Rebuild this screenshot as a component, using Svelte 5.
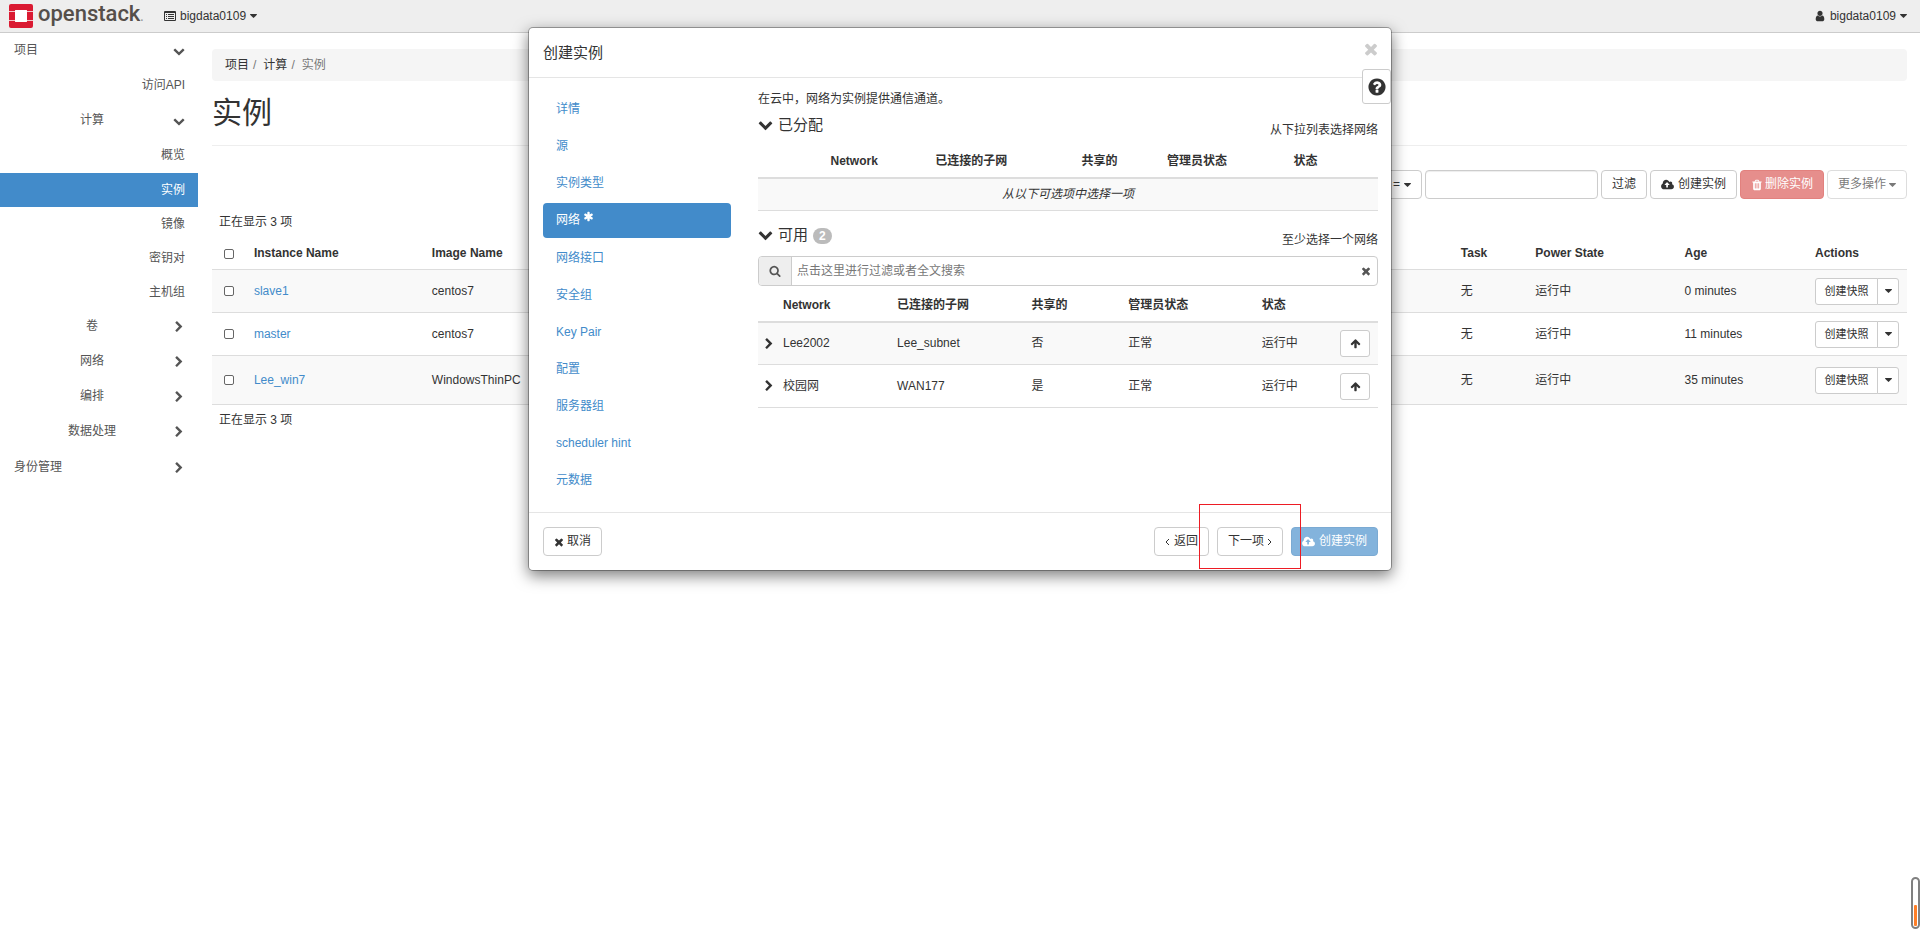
<script>
  const icons = {
    down: 'M1683 808l-742 741q-19 19-45 19t-45-19l-742-741q-19-19-19-45.5t19-45.5l166-165q19-19 45-19t45 19l531 531 531-531q19-19 45-19t45 19l166 165q19 19 19 45.5t-19 45.5z',
    right: 'M1363 877l-742 742q-19 19-45 19t-45-19l-166-166q-19-19-19-45t19-45l531-531-531-531q-19-19-19-45t19-45l166-166q19-19 45-19t45 19l742 742q19 19 19 45t-19 45z',
    times: 'M1490 1322q0 40-28 68l-136 136q-28 28-68 28t-68-28l-294-294-294 294q-28 28-68 28t-68-28l-136-136q-28-28-28-68t28-68l294-294-294-294q-28-28-28-68t28-68l136-136q28-28 68-28t68 28l294 294 294-294q28-28 68-28t68 28l136 136q28 28 28 68t-28 68l-294 294 294 294q28 28 28 68z',
    search: 'M1216 832q0-185-131.5-316.5t-316.5-131.5-316.5 131.5-131.5 316.5 131.5 316.5 316.5 131.5 316.5-131.5 131.5-316.5zm512 832q0 52-38 90t-90 38q-54 0-90-38l-343-342q-179 124-399 124-143 0-273.5-55.5t-225-150-150-225-55.5-273.5 55.5-273.5 150-225 225-150 273.5-55.5 273.5 55.5 225 150 150 225 55.5 273.5q0 220-124 399l343 343q37 37 37 90z',
    asterisk: 'M1546 1050q46 26 59.5 77.5t-12.5 97.5l-64 110q-26 46-77.5 59.5t-97.5-12.5l-266-153v307q0 52-38 90t-90 38h-128q-52 0-90-38t-38-90v-307l-266 153q-46 26-97.5 12.5t-77.5-59.5l-64-110q-26-46-12.5-97.5t59.5-77.5l266-154-266-154q-46-26-59.5-77.5t12.5-97.5l64-110q26-46 77.5-59.5t97.5 12.5l266 153v-307q0-52 38-90t90-38h128q52 0 90 38t38 90v307l266-153q46-26 97.5-12.5t77.5 59.5l64 110q26 46 12.5 97.5t-59.5 77.5l-266 154z',
    cloud: 'M1280 864q0-14-9-23l-352-352q-9-9-23-9t-23 9l-351 351q-10 12-10 24 0 14 9 23t23 9h224v352q0 13 9.5 22.5t22.5 9.5h192q13 0 22.5-9.5t9.5-22.5v-352h224q13 0 22.5-9.5t9.5-22.5zm640 288q0 159-112.5 271.5t-271.5 112.5h-1088q-185 0-316.5-131.5t-131.5-316.5q0-130 70-240t188-165q-2-30-2-43 0-212 150-362t362-150q156 0 285.5 87t188.5 231q71-62 166-62 106 0 181 75t75 181q0 76-41 138 130 31 213.5 135.5t83.5 238.5z',
    trash: 'M704 1376v-704q0-14-9-23t-23-9h-64q-14 0-23 9t-9 23v704q0 14 9 23t23 9h64q14 0 23-9t9-23zm256 0v-704q0-14-9-23t-23-9h-64q-14 0-23 9t-9 23v704q0 14 9 23t23 9h64q14 0 23-9t9-23zm256 0v-704q0-14-9-23t-23-9h-64q-14 0-23 9t-9 23v704q0 14 9 23t23 9h64q14 0 23-9t9-23zm-544-992h448l-48-117q-7-9-17-11h-317q-10 2-17 11zm928 32v64q0 14-9 23t-23 9h-96v948q0 83-47 143.5t-113 60.5h-832q-66 0-113-58.5t-47-141.5v-952h-96q-14 0-23-9t-9-23v-64q0-14 9-23t23-9h309l70-167q15-37 54-63t79-26h320q40 0 79 26t54 63l70 167h309q14 0 23 9t9 23z',
    user: 'M1536 1399q0 109-62.5 187t-150.5 78h-854q-88 0-150.5-78t-62.5-187q0-85 8.5-160.5t31.5-152 58.5-131 94-89 134.5-34.5q131 128 313 128t313-128q76 0 134.5 34.5t94 89 58.5 131 31.5 152 8.5 160.5zm-256-887q0 159-112.5 271.5t-271.5 112.5-271.5-112.5-112.5-271.5 112.5-271.5 271.5-112.5 271.5 112.5 112.5 271.5z',
    question: 'M1024 1376v-192q0-14-9-23t-23-9h-192q-14 0-23 9t-9 23v192q0 14 9 23t23 9h192q14 0 23-9t9-23zm256-672q0-88-55.5-163t-138.5-116-170-41q-243 0-371 213-15 24 8 42l132 100q7 6 19 6 16 0 25-12 53-68 86-92 34-24 86-24 48 0 85.5 26t37.5 59q0 38-20 61t-68 45q-63 28-115.5 86.5t-52.5 125.5v36q0 14 9 23t23 9h192q14 0 23-9t9-23q0-19 21.5-49.5t54.5-49.5q32-18 49-28.5t46-35 44.5-48 28-60.5 12.5-81zm384 192q0 209-103 385.5t-279.5 279.5-385.5 103-385.5-103-279.5-279.5-103-385.5 103-385.5 279.5-279.5 385.5-103 385.5 103 279.5 279.5 103 385.5z',
    up: 'M1675 971q0 51-37 90l-75 75q-38 38-91 38-54 0-90-38l-294-293v704q0 52-37.5 84.5t-90.5 32.5h-128q-53 0-90.5-32.5t-37.5-84.5v-704l-294 293q-36 38-90 38t-90-38l-75-75q-38-38-38-90 0-53 38-91l651-651q35-37 90-37 54 0 91 37l651 651q37 39 37 91z',
    caret: 'M1408 704q0 26-19 45l-448 448q-19 19-45 19t-45-19l-448-448q-19-19-19-45t19-45 45-19h896q26 0 45 19t19 45z'
  };

  const menu = [
    { label: '项目', kind: 'top', icon: 'down' },
    { label: '访问API', kind: 'entry' },
    { label: '计算', kind: 'group', icon: 'down' },
    { label: '概览', kind: 'entry' },
    { label: '实例', kind: 'leaf', active: true },
    { label: '镜像', kind: 'leaf' },
    { label: '密钥对', kind: 'leaf' },
    { label: '主机组', kind: 'leaf' },
    { label: '卷', kind: 'group', icon: 'right' },
    { label: '网络', kind: 'group', icon: 'right' },
    { label: '编排', kind: 'group', icon: 'right' },
    { label: '数据处理', kind: 'group', icon: 'right' },
    { label: '身份管理', kind: 'top', icon: 'right' }
  ];

  const instances = [
    { name: 'slave1', image: 'centos7', task: '无', power: '运行中', age: '0 minutes' },
    { name: 'master', image: 'centos7', task: '无', power: '运行中', age: '11 minutes' },
    { name: 'Lee_win7', image: 'WindowsThinPC', task: '无', power: '运行中', age: '35 minutes', tall: true }
  ];

  const steps = ['详情', '源', '实例类型', '网络', '网络接口', '安全组', 'Key Pair', '配置', '服务器组', 'scheduler hint', '元数据'];
  const current = '网络';

  const networks = [
    { name: 'Lee2002', subnet: 'Lee_subnet', shared: '否', admin: '正常', status: '运行中' },
    { name: '校园网', subnet: 'WAN177', shared: '是', admin: '正常', status: '运行中' }
  ];
</script>

{#snippet icon(name, size = 12)}
  <svg class="icon" width={size} height={size} viewBox="0 0 1792 1792" aria-hidden="true"><path d={icons[name]} /></svg>
{/snippet}

{#snippet cloud()}
  <svg class="icon" width="13" height="12" viewBox="0 0 1920 1792" aria-hidden="true"><path d={icons.cloud} /></svg>
{/snippet}

{#snippet caret()}
  <svg class="icon" width="7" height="4" viewBox="384 640 1024 576" aria-hidden="true"><path d={icons.caret} /></svg>
{/snippet}

<header class="navbar">
  <a class="brand" href="#home">
    <svg width="24" height="24" viewBox="0 0 24 24" aria-hidden="true">
      <path fill="#f3c3c9" d="M0 7h6v10H0zM18 7h6v10h-6z" />
      <path
        fill="#da1a32"
        d="M2 0h20a2 2 0 0 1 2 2v5h-6a1 1 0 0 0-1-1H7a1 1 0 0 0-1 1H0V2a2 2 0 0 1 2-2zM0 8h6v8H0zM18 8h6v8h-6zM0 17h6a1 1 0 0 0 1 1h10a1 1 0 0 0 1-1h6v5a2 2 0 0 1-2 2H2a2 2 0 0 1-2-2z"
      />
      <path fill="#fff" d="M7 6h10a1 1 0 0 1 1 1v10a1 1 0 0 1-1 1H7a1 1 0 0 1-1-1V7a1 1 0 0 1 1-1z" />
    </svg>
    <span class="wordmark">openstack<small>.</small></span>
  </a>
  <button class="nav-button" type="button">
    <svg width="12" height="10" viewBox="0 0 12 10" aria-hidden="true">
      <path fill="#333" fill-rule="evenodd" d="M1 0h10a1 1 0 0 1 1 1v8a1 1 0 0 1-1 1H1a1 1 0 0 1-1-1V1a1 1 0 0 1 1-1zM1 2v7h10V2zM2 3h1v1H2zM4 3h6v1H4zM2 5h1v1H2zM4 5h6v1H4zM2 7h1v1H2zM4 7h6v1H4z" />
    </svg>
    bigdata0109 {@render caret()}
  </button>
  <button class="nav-button account" type="button">{@render icon('user')}bigdata0109 {@render caret()}</button>
</header>

<div class="layout">
  <nav class="sidebar">
    <ul>
      {#each menu as item}
        <li>
          <a href="#panel" class={item.kind} class:active={item.active}>
            <span>{item.label}</span>
            {#if item.icon}{@render icon(item.icon)}{/if}
          </a>
        </li>
      {/each}
    </ul>
  </nav>

  <main>
    <ol class="breadcrumb">
      <li><a href="#project">项目</a></li>
      <li><a href="#compute">计算</a></li>
      <li>实例</li>
    </ol>
    <h1>实例</h1>
    <div class="toolbar">
      <button class="btn operator" type="button">= {@render caret()}</button>
      <input class="filter" type="text" aria-label="过滤" />
      <button class="btn" type="button">过滤</button>
      <button class="btn" type="button">{@render cloud()}创建实例</button>
      <button class="btn danger" type="button" disabled>{@render icon('trash')}删除实例</button>
      <button class="btn faded" type="button" disabled>更多操作{@render caret()}</button>
    </div>
    <p class="count">正在显示 3 项</p>
    <table class="instances">
      <colgroup>
        <col class="i-check" /><col class="i-name" /><col /><col class="i-task" /><col class="i-power" /><col class="i-age" /><col class="i-actions" />
      </colgroup>
      <thead>
        <tr>
          <th><input type="checkbox" aria-label="全部" /></th>
          <th>Instance Name</th>
          <th>Image Name</th>
          <th>Task</th>
          <th>Power State</th>
          <th>Age</th>
          <th>Actions</th>
        </tr>
      </thead>
      <tbody>
        {#each instances as row}
          <tr class:tall={row.tall}>
            <td><input type="checkbox" aria-label={row.name} /></td>
            <td><a href="#instance">{row.name}</a></td>
            <td>{row.image}</td>
            <td>{row.task}</td>
            <td>{row.power}</td>
            <td>{row.age}</td>
            <td>
              <div class="split">
                <button type="button">创建快照</button><button type="button" aria-label="更多操作">{@render caret()}</button>
              </div>
            </td>
          </tr>
        {/each}
      </tbody>
    </table>
    <p class="count after">正在显示 3 项</p>
  </main>
</div>

<div class="modal" role="dialog" aria-labelledby="modal-title">
  <div class="modal-header">
    <h2 id="modal-title">创建实例</h2>
    <button class="close" type="button" aria-label="关闭">{@render icon('times', 18)}</button>
  </div>
  <button class="help" type="button" aria-label="帮助">{@render icon('question', 20)}</button>
  <div class="modal-body">
    <ul class="steps">
      {#each steps as step}
        <li>
          <a href="#step" class:current={step === current}>{step}{#if step === current}<sup>{@render icon('asterisk', 11)}</sup>{/if}</a>
        </li>
      {/each}
    </ul>
    <div class="pane">
      <p class="intro">在云中，网络为实例提供通信通道。</p>

      <div class="section-head">
        <h3>{@render icon('down', 15)}已分配</h3>
        <span>从下拉列表选择网络</span>
      </div>
      <table class="allocated">
        <colgroup>
          <col class="a-lead" /><col class="a-name" /><col class="a-subnet" /><col class="a-shared" /><col class="a-admin" /><col />
        </colgroup>
        <thead>
          <tr><th></th><th>Network</th><th>已连接的子网</th><th>共享的</th><th>管理员状态</th><th>状态</th></tr>
        </thead>
        <tbody>
          <tr><td colspan="6"><em>从以下可选项中选择一项</em></td></tr>
        </tbody>
      </table>

      <div class="section-head available-head">
        <h3>{@render icon('down', 15)}可用 <b>2</b></h3>
        <span>至少选择一个网络</span>
      </div>
      <div class="search">
        <label for="network-search">{@render icon('search')}</label>
        <input id="network-search" type="text" placeholder="点击这里进行过滤或者全文搜索" />
        <button type="button" aria-label="清除">{@render icon('times')}</button>
      </div>
      <table class="available">
        <colgroup>
          <col class="v-lead" /><col class="v-name" /><col class="v-subnet" /><col class="v-shared" /><col class="v-admin" /><col /><col class="v-action" />
        </colgroup>
        <thead>
          <tr><th></th><th>Network</th><th>已连接的子网</th><th>共享的</th><th>管理员状态</th><th>状态</th><th></th></tr>
        </thead>
        <tbody>
          {#each networks as net}
            <tr>
              <td>{@render icon('right')}</td>
              <td>{net.name}</td>
              <td>{net.subnet}</td>
              <td>{net.shared}</td>
              <td>{net.admin}</td>
              <td>{net.status}</td>
              <td><button type="button" aria-label="分配">{@render icon('up', 11)}</button></td>
            </tr>
          {/each}
        </tbody>
      </table>
    </div>
  </div>
  <div class="modal-footer">
    <button class="btn cancel" type="button">{@render icon('times')}取消</button>
    <button class="btn" type="button">
      <svg class="angle" width="5" height="8" viewBox="0 0 5 8" aria-hidden="true"><path d="M4 1L1 4l3 3" /></svg>返回
    </button>
    <button class="btn next" type="button">
      下一项<svg class="angle" width="5" height="8" viewBox="0 0 5 8" aria-hidden="true"><path d="M1 1l3 3-3 3" /></svg>
      <i class="marker"></i>
    </button>
    <button class="btn primary" type="button" disabled>{@render cloud()}创建实例</button>
  </div>
</div>

<div class="gauge"><i></i></div>

<style>
  :global(body) {
    background: #fff;
    color: #333;
    font: 12px/17px "Liberation Sans", "Noto Sans CJK SC", sans-serif;
  }
  :global(button),
  :global(input) {
    font: inherit;
    color: inherit;
    box-sizing: border-box;
  }
  ul,
  ol,
  p,
  h1,
  h2,
  h3 {
    margin: 0;
    padding: 0;
    list-style: none;
    font-weight: 400;
  }
  a {
    color: #428bca;
    text-decoration: none;
  }
  .icon {
    fill: currentColor;
    flex: none;
  }

  .navbar {
    display: flex;
    align-items: center;
    height: 32px;
    padding: 0 13px 0 9px;
    background: #eee;
    border-bottom: 1px solid #ccc;
  }
  .brand {
    display: flex;
    align-items: center;
    gap: 5px;
    width: 155px;
    color: #554f4a;
  }
  .wordmark {
    font: 500 22px/24px Roboto, sans-serif;
    padding-bottom: 1px;
  }
  .wordmark small {
    font-size: 12px;
    color: #999;
  }
  .nav-button {
    display: flex;
    align-items: center;
    gap: 4px;
    padding: 0;
    border: 0;
    background: none;
  }
  .account {
    margin-left: auto;
  }

  .layout {
    display: flex;
    align-items: flex-start;
  }
  .sidebar {
    flex: none;
    width: 198px;
  }
  .sidebar a {
    display: flex;
    align-items: center;
    height: 35px;
    padding: 0 13px 0 11px;
    color: #555;
  }
  .sidebar a span {
    flex: 1;
  }
  .sidebar .top {
    padding-left: 14px;
  }
  .sidebar li + li .top {
    height: 37px;
  }
  .sidebar .group span {
    text-align: center;
  }
  .sidebar .entry,
  .sidebar .leaf {
    text-align: right;
  }
  .sidebar .leaf {
    height: 34px;
  }
  .sidebar .active {
    background: #428bca;
    color: #fff;
  }

  main {
    flex: 1;
    min-width: 0;
    padding: 16px 13px 0 14px;
  }
  .breadcrumb {
    display: flex;
    align-items: center;
    height: 32px;
    padding: 0 13px;
    background: #f5f5f5;
    border-radius: 4px;
    color: #777;
  }
  .breadcrumb a {
    color: #333;
  }
  .breadcrumb li + li::before {
    content: "/";
    padding: 0 7px 0 4px;
  }
  h1 {
    padding: 15px 0;
    border-bottom: 1px solid #eee;
    font-size: 30px;
    line-height: 34px;
  }
  .toolbar {
    display: flex;
    justify-content: flex-end;
    gap: 3px;
    margin-top: 24px;
  }
  .btn {
    display: inline-flex;
    align-items: center;
    justify-content: center;
    gap: 4px;
    height: 29px;
    padding: 0 10px;
    border: 1px solid #ccc;
    border-radius: 4px;
    background: #fff;
    color: #333;
    white-space: nowrap;
  }
  .filter {
    width: 173px;
    height: 29px;
    border: 1px solid #ccc;
    border-radius: 4px;
    box-shadow: inset 0 1px 1px rgba(0, 0, 0, 0.075);
  }
  .danger {
    gap: 2px;
    background: #d9534f;
    border-color: #d43f3a;
    color: #fff;
    opacity: 0.65;
  }
  .faded {
    gap: 3px;
    opacity: 0.65;
  }
  .primary {
    background: #428bca;
    border-color: #357ebd;
    color: #fff;
    opacity: 0.65;
  }
  .count {
    margin: 15px 0 5px;
    padding-left: 7px;
  }
  .count.after {
    margin-top: 7px;
  }

  table {
    width: 100%;
    table-layout: fixed;
    border-collapse: separate;
    border-spacing: 0;
  }
  th,
  td {
    padding: 0 8px;
    text-align: left;
    vertical-align: middle;
    border-bottom: 1px solid #ddd;
    white-space: nowrap;
  }
  th {
    padding: 9px 8px 7px;
    font-weight: 700;
  }
  tbody tr:nth-child(odd) td {
    background: #f9f9f9;
  }
  .instances tbody td {
    height: 42px;
  }
  .instances tbody .tall td {
    height: 48px;
  }
  .instances th:first-child,
  .instances td:first-child {
    padding-left: 12px;
  }
  .i-check { width: 2%; }
  .i-name { width: 10.5%; }
  .i-task { width: 4.4%; }
  .i-power { width: 8.8%; }
  .i-age { width: 7.7%; }
  .i-actions { width: 5.9%; }
  input[type="checkbox"] {
    display: block;
    appearance: none;
    width: 10px;
    height: 10px;
    margin: 0;
    border: 1px solid #666;
    border-radius: 2px;
    background: #fff;
  }
  .split {
    display: flex;
    width: 84px;
  }
  .split button {
    flex: 1;
    height: 27px;
    padding: 0;
    border: 1px solid #ccc;
    border-radius: 3px 0 0 3px;
    background: #fff;
    font-size: 11px;
  }
  .split button + button {
    display: flex;
    align-items: center;
    justify-content: center;
    flex: 0 0 22px;
    margin-left: -1px;
    border-radius: 0 3px 3px 0;
  }

  .modal {
    position: absolute;
    top: 27px;
    left: 0;
    right: 0;
    width: 45%;
    box-sizing: border-box;
    margin: 0 auto;
    background: #fff;
    background-clip: padding-box;
    border: 1px solid rgba(0, 0, 0, 0.3);
    border-radius: 5px;
    box-shadow: 0 5px 15px rgba(0, 0, 0, 0.5);
  }
  .modal-header {
    display: flex;
    justify-content: space-between;
    align-items: flex-start;
    height: 49px;
    padding: 0 11px 0 14px;
    border-bottom: 1px solid #e5e5e5;
  }
  h2 {
    font-size: 15px;
    line-height: 49px;
  }
  .close {
    display: flex;
    margin-top: 12px;
    padding: 0;
    border: 0;
    background: none;
    color: #ccc;
  }
  .help {
    position: absolute;
    top: 41px;
    right: 0;
    display: flex;
    align-items: center;
    justify-content: center;
    width: 29px;
    height: 35px;
    padding: 0;
    border: 1px solid #ccc;
    border-radius: 3px;
    background: #fff;
  }
  .modal-body {
    display: grid;
    grid-template-columns: 188px 1fr;
    gap: 27px;
    padding: 13px 13px 14px 14px;
  }
  .steps {
    display: flex;
    flex-direction: column;
    gap: 2px;
    padding-top: 1px;
  }
  .steps a {
    display: flex;
    align-items: center;
    height: 35px;
    padding: 0 13px;
    border-radius: 4px;
  }
  .steps .current {
    margin-bottom: 1px;
    background: #428bca;
    color: #fff;
  }
  sup {
    display: flex;
    padding: 0 0 8px 3px;
  }
  .section-head {
    display: flex;
    justify-content: space-between;
    align-items: flex-end;
    height: 24px;
    margin: 7px 0 5px;
  }
  .available-head {
    margin: 14px 0 7px;
  }
  h3 {
    display: flex;
    align-items: center;
    align-self: flex-start;
    gap: 5px;
    font-size: 15px;
    line-height: 19px;
  }
  h3 b {
    margin-top: 2px;
    padding: 0 6px;
    border-radius: 8px;
    background: #bbb;
    color: #fff;
    font-size: 12px;
    line-height: 16px;
  }
  .pane th {
    border-bottom: 2px solid #ddd;
  }
  .allocated td {
    height: 31px;
    text-align: center;
  }
  .a-lead { width: 10.4%; }
  .a-name { width: 16.9%; }
  .a-subnet { width: 23.6%; }
  .a-shared { width: 13.8%; }
  .a-admin { width: 20.4%; }
  .search {
    display: flex;
    height: 28px;
    margin-bottom: 2px;
    border: 1px solid #ccc;
    border-radius: 4px;
    overflow: hidden;
    color: #555;
  }
  .search label {
    display: flex;
    align-items: center;
    justify-content: center;
    width: 32px;
    border-right: 1px solid #ccc;
    background: #eee;
  }
  .search input {
    flex: 1;
    min-width: 0;
    padding: 0 5px;
    border: 0;
    outline: 0;
  }
  .search input::placeholder {
    color: #777;
  }
  .search button {
    display: flex;
    align-items: center;
    padding: 0 5px;
    border: 0;
    background: none;
  }
  .available tbody td {
    height: 42px;
  }
  .available tbody tr:first-child td {
    height: 41px;
  }
  .available td:first-child {
    padding: 0 0 0 5px;
  }
  .available td .icon {
    display: block;
  }
  .available button {
    display: flex;
    align-items: center;
    justify-content: center;
    width: 30px;
    height: 27px;
    padding: 0;
    border: 1px solid #ccc;
    border-radius: 3px;
    background: #fff;
  }
  .v-lead { width: 17px; }
  .v-name { width: 18.4%; }
  .v-subnet { width: 21.7%; }
  .v-shared { width: 15.6%; }
  .v-admin { width: 21.5%; }
  .v-action { width: 46px; }

  .modal-footer {
    display: flex;
    gap: 8px;
    padding: 14px 13px 14px 14px;
    border-top: 1px solid #e5e5e5;
  }
  .cancel {
    gap: 2px;
    margin-right: auto;
  }
  .cancel .icon {
    margin-left: -1px;
  }
  .angle {
    fill: none;
    stroke: currentColor;
  }
  .next {
    position: relative;
    gap: 3px;
  }
  .marker {
    position: absolute;
    inset: -24px -19px -14px;
    border: 1px solid #ed1c24;
    z-index: 1;
  }

  .gauge {
    position: fixed;
    right: 0;
    bottom: 17px;
    box-sizing: border-box;
    width: 9px;
    height: 52px;
    padding: 0 1px 1px;
    display: flex;
    align-items: flex-end;
    border: 2px solid #808080;
    border-radius: 5px;
    background: #fff;
  }
  .gauge i {
    flex: 1;
    height: 45%;
    border-radius: 1px;
    background: #ff7f27;
  }
</style>
